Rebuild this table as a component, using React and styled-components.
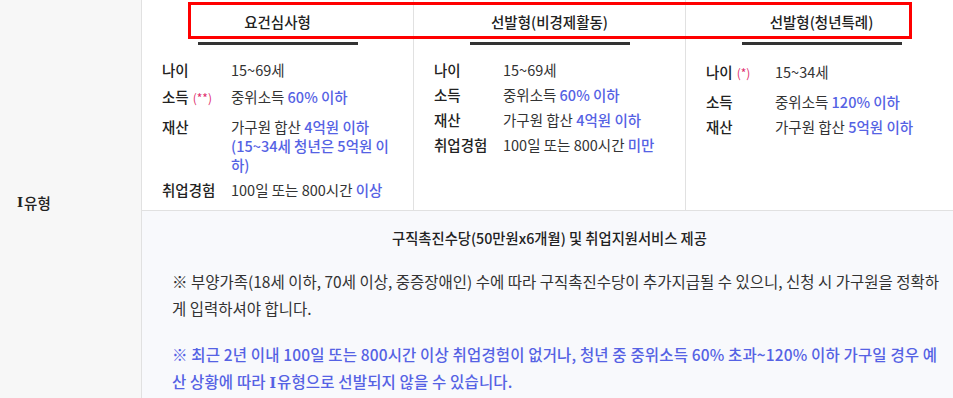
import React from 'react';
import styled, { createGlobalStyle } from 'styled-components';

const GlobalStyle = createGlobalStyle`
  body {
    margin: 0;
    overflow: hidden;
    background: #fff;
    font-family: "Noto Sans CJK KR", "Noto Sans", sans-serif;
    color: #333;
  }
`

const Table = styled.div`
  display: grid;
  grid-template-columns: 142px 815px;
  width: 957px;
  position: relative;
`
const TypeCell = styled.div`
  background-color: #f7f7f7;
  border-right: 1px solid #e1e1e1;
  display: flex;
  align-items: center;
  padding-left: 17px;
  font-size: 14.5px;
  font-weight: 500;
  color: #222;
`
const Numeral = styled.span`
  font-family: "DejaVu Serif", "Liberation Serif", serif;
  font-size: 0.9em;
  font-weight: 700;
  line-height: 1;
  margin-right: 1px;
`
const Body = styled.div`
  display: flex;
  flex-direction: column;
`
const Columns = styled.div`
  display: grid;
  grid-template-columns: 271px 272px 272px;
  height: 211px;
  border-bottom: 1px solid #e1e1e1;
  box-sizing: border-box;
`
const Column = styled.div`
  border-left: ${p => (p.$first ? 'none' : '1px solid #e1e1e1')};
  display: flex;
  flex-direction: column;
`
const Heading = styled.div`
  margin-top: 12px;
  line-height: 20px;
  text-align: center;
  font-size: 14.5px;
  font-weight: 500;
  color: #222;
`
const Bar = styled.div`
  width: 160px;
  height: 3px;
  background-color: #333;
  margin: 10px auto 15px;
`
const Rows = styled.div`
  padding: 0 12px 0 20px;
`
const Row = styled.div`
  display: grid;
  grid-template-columns: 69px 1fr;
  font-size: 14.5px;
  line-height: 19px;
  padding: ${p => (p.$marked ? '2px 0 4px' : '0')};
  margin-bottom: 6px;
`
const Label = styled.span`
  font-weight: 500;
  color: #222;
`
const Mark = styled.span`
  font-size: 12px;
  font-weight: 400;
  color: #e0306e;
  margin-left: 4px;
`
const Value = styled.span`
  color: #333;
`
const Blue = styled.span`
  color: #5562e4;
  font-weight: 500;
`
const Notice = styled.div`
  background-color: #f8f9fc;
  padding: 17px 15px 10px 30px;
`
const NoticeTitle = styled.div`
  text-align: center;
  font-size: 14.3px;
  font-weight: 500;
  line-height: 20px;
  color: #222;
  margin-left: -30px;
  margin-right: -15px;
  margin-bottom: 20px;
`
const Para = styled.p`
  margin: 0 0 19px;
  font-size: 15.5px;
  line-height: 27px;
  color: ${p => (p.$blue ? '#5562e4' : '#333')};
  font-weight: ${p => (p.$blue ? 500 : 400)};
  letter-spacing: ${p => (p.$blue ? '0.15px' : '0')};
  &:last-child {
    margin-bottom: 0;
  }
`
const Highlight = styled.div`
  position: absolute;
  top: 2px;
  left: 188px;
  width: 724px;
  height: 37px;
  border: 3px solid #f00;
  box-sizing: border-box;
`

const columns = [
  {
    title: '요건심사형',
    rows: [
      { label: '나이', value: ['15~69세'] },
      { label: '소득', mark: '(**)', value: ['중위소득 ', <Blue key="b">60% 이하</Blue>] },
      {
        label: '재산',
        value: ['가구원 합산 ', <Blue key="b">4억원 이하 (15~34세 청년은 5억원 이하)</Blue>],
      },
      { label: '취업경험', value: ['100일 또는 800시간 ', <Blue key="b">이상</Blue>] },
    ],
  },
  {
    title: '선발형(비경제활동)',
    rows: [
      { label: '나이', value: ['15~69세'] },
      { label: '소득', value: ['중위소득 ', <Blue key="b">60% 이하</Blue>] },
      { label: '재산', value: ['가구원 합산 ', <Blue key="b">4억원 이하</Blue>] },
      { label: '취업경험', value: ['100일 또는 800시간 ', <Blue key="b">미만</Blue>] },
    ],
  },
  {
    title: '선발형(청년특례)',
    rows: [
      { label: '나이', mark: '(*)', value: ['15~34세'] },
      { label: '소득', value: ['중위소득 ', <Blue key="b">120% 이하</Blue>] },
      { label: '재산', value: ['가구원 합산 ', <Blue key="b">5억원 이하</Blue>] },
    ],
  },
]

const App = () => (
  <>
    <GlobalStyle />
    <Table>
      <TypeCell>
        <Numeral>Ⅰ</Numeral>유형
      </TypeCell>
      <Body>
        <Columns>
          {columns.map((col, i) => (
            <Column key={col.title} $first={i === 0}>
              <Heading>{col.title}</Heading>
              <Bar />
              <Rows>
                {col.rows.map(row => (
                  <Row key={row.label} $marked={!!row.mark}>
                    <Label>
                      {row.label}
                      {row.mark && <Mark>{row.mark}</Mark>}
                    </Label>
                    <Value>{row.value}</Value>
                  </Row>
                ))}
              </Rows>
            </Column>
          ))}
        </Columns>
        <Notice>
          <NoticeTitle>구직촉진수당(50만원x6개월) 및 취업지원서비스 제공</NoticeTitle>
          <Para>
            ※ 부양가족(18세 이하, 70세 이상, 중증장애인) 수에 따라 구직촉진수당이 추가지급될 수 있으니, 신청 시 가구원을 정확하게 입력하셔야 합니다.
          </Para>
          <Para $blue>
            ※ 최근 2년 이내 100일 또는 800시간 이상 취업경험이 없거나, 청년 중 중위소득 60% 초과~120% 이하 가구일 경우 예산 상황에 따라 <Numeral>Ⅰ</Numeral>유형으로 선발되지 않을 수 있습니다.
          </Para>
        </Notice>
      </Body>
      <Highlight />
    </Table>
  </>
)

export default App
